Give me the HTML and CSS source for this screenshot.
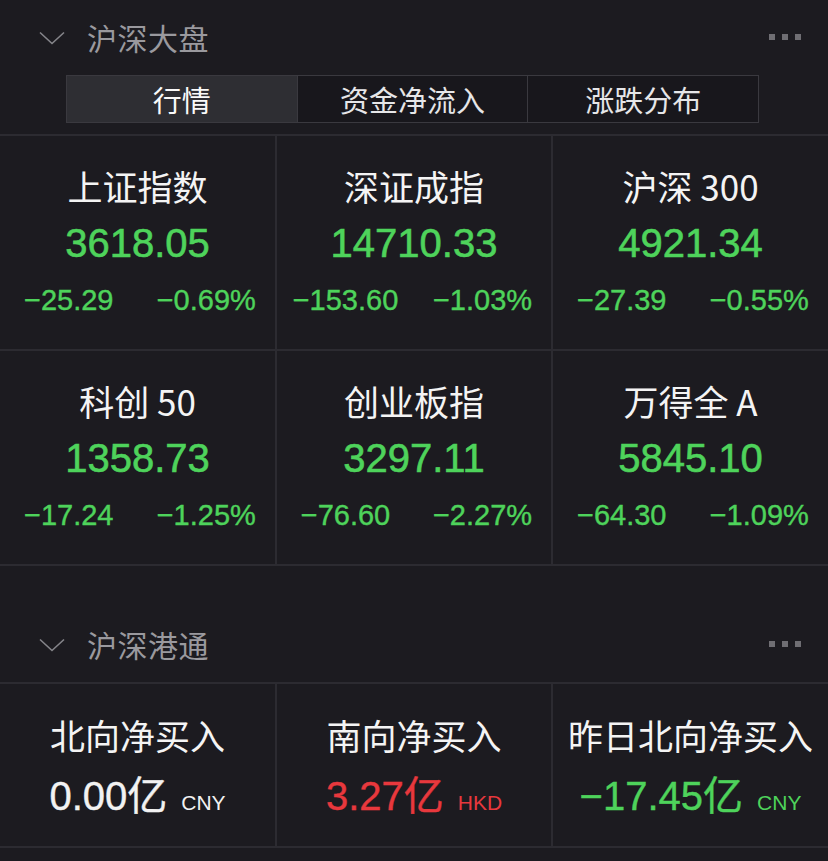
FILE: index.html
```html
<!DOCTYPE html>
<html>
<head>
    <title>沪深大盘</title>
    <link rel="stylesheet" href="styles.css">
</head>
<body>
    <div class="section-head">
        <svg class="chevron" width="26" height="14" viewBox="0 0 26 14"><polyline points="1,1.5 13,12.5 25,1.5" fill="none" stroke="#85858a" stroke-width="1.6"/></svg>
        <span class="section-title">沪深大盘</span>
        <span class="more"><i></i><i></i><i></i></span>
    </div>

    <div class="tabs">
        <div class="tab active">行情</div>
        <div class="tab">资金净流入</div>
        <div class="tab">涨跌分布</div>
    </div>

    <div class="grid index-grid">
        <div class="cell">
            <div class="name">上证指数</div>
            <div class="price up">3618.05</div>
            <div class="change up"><span>−25.29</span><span>−0.69%</span></div>
        </div>
        <div class="cell">
            <div class="name">深证成指</div>
            <div class="price up">14710.33</div>
            <div class="change up"><span>−153.60</span><span>−1.03%</span></div>
        </div>
        <div class="cell">
            <div class="name">沪深 300</div>
            <div class="price up">4921.34</div>
            <div class="change up"><span>−27.39</span><span>−0.55%</span></div>
        </div>
        <div class="cell">
            <div class="name">科创 50</div>
            <div class="price up">1358.73</div>
            <div class="change up"><span>−17.24</span><span>−1.25%</span></div>
        </div>
        <div class="cell">
            <div class="name">创业板指</div>
            <div class="price up">3297.11</div>
            <div class="change up"><span>−76.60</span><span>−2.27%</span></div>
        </div>
        <div class="cell">
            <div class="name">万得全 A</div>
            <div class="price up">5845.10</div>
            <div class="change up"><span>−64.30</span><span>−1.09%</span></div>
        </div>
    </div>

    <div class="section-head second">
        <svg class="chevron" width="26" height="14" viewBox="0 0 26 14"><polyline points="1,1.5 13,12.5 25,1.5" fill="none" stroke="#85858a" stroke-width="1.6"/></svg>
        <span class="section-title">沪深港通</span>
        <span class="more"><i></i><i></i><i></i></span>
    </div>

    <div class="grid flow-grid">
        <div class="cell">
            <div class="name">北向净买入</div>
            <div class="amount">0.00亿<small>CNY</small></div>
        </div>
        <div class="cell">
            <div class="name">南向净买入</div>
            <div class="amount down">3.27亿<small>HKD</small></div>
        </div>
        <div class="cell">
            <div class="name">昨日北向净买入</div>
            <div class="amount up">−17.45亿<small>CNY</small></div>
        </div>
    </div>
</body>
</html>
```

FILE: styles.css
```css
body {
    margin: 0;
    background-color: #1c1b20;
    color: #f2f2f2;
    font-family: "Liberation Sans", "Noto Sans CJK SC", sans-serif;
}

.section-head {
    display: flex;
    align-items: center;
    height: 74px;
    padding: 0 27px 0 39px;
}

.section-head.second {
    margin-top: 40px;
    height: 76px;
}

.chevron {
    margin-top: 2px;
}

.section-title {
    margin-left: 22px;
    font-family: "Noto Sans CJK SC", sans-serif;
    font-size: 30px;
    color: #9a999e;
    letter-spacing: 0.5px;
}

.more {
    margin-left: auto;
    display: flex;
    gap: 7px;
}

.more i {
    width: 6px;
    height: 6px;
    background-color: #6f6e73;
}

.tabs {
    display: flex;
    margin: 1px 0 0 66px;
    width: 693px;
    height: 48px;
    border: 1px solid #3a393f;
    box-sizing: border-box;
}

.tab {
    flex: 1;
    display: flex;
    align-items: center;
    justify-content: center;
    font-family: "Noto Sans CJK SC", sans-serif;
    font-size: 29px;
    color: #e6e6e8;
    background-color: #18171c;
    border-left: 1px solid #3a393f;
}

.tab:first-child {
    border-left: none;
}

.tab.active {
    background-color: #2e2e33;
    color: #fafafa;
}

.grid {
    display: grid;
    grid-template-columns: 275px 274px 275px;
    column-gap: 2px;
    row-gap: 2px;
    background-color: #2c2b31;
    padding: 2px 0;
}

.index-grid {
    margin-top: 11px;
    grid-template-rows: 213px 213px;
}

.flow-grid {
    grid-template-rows: 162px;
}

.cell {
    background-color: #1c1b20;
    display: flex;
    flex-direction: column;
    align-items: center;
}

.index-grid .cell {
    padding-top: 28px;
}

.name {
    font-family: "Noto Sans CJK SC", sans-serif;
    font-size: 35px;
    line-height: 44px;
    color: #f4f4f4;
}

.price {
    margin-top: 12px;
    font-size: 40px;
    line-height: 46px;
    -webkit-text-stroke: 0.6px currentColor;
}

.change {
    margin-top: 16px;
    width: 100%;
    display: flex;
    font-size: 29px;
    line-height: 36px;
    -webkit-text-stroke: 0.4px currentColor;
}

.change span {
    flex: 1;
    text-align: center;
}

.up {
    color: #4ed35b;
}

.down {
    color: #e8383d;
}

.flow-grid .cell {
    padding-top: 29px;
}

.amount {
    margin-top: 16px;
    font-size: 40px;
    line-height: 46px;
    -webkit-text-stroke: 0.4px currentColor;
}

.amount small {
    margin-left: 14px;
    font-size: 21px;
    -webkit-text-stroke: 0;
}
```
